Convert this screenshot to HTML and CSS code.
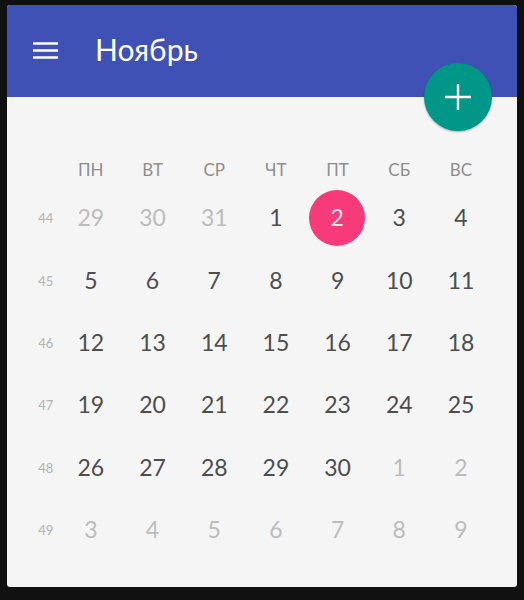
FILE: index.html
```html
<!DOCTYPE html>
<html lang="ru">
<head>
<meta charset="utf-8">
<title>Ноябрь</title>
<link rel="stylesheet" href="styles.css">
</head>
<body>
<main class="card">
  <header class="bar">
    <svg class="menu" viewBox="0 0 25 17" aria-hidden="true"><path d="M0 1.5H25M0 8.5H25M0 15.5H25"/></svg>
    <h1 class="title">Ноябрь</h1>
    <button class="fab" type="button" aria-label="Добавить">
      <svg viewBox="0 0 26 26" aria-hidden="true"><path d="M13 0V26M0 13H26"/></svg>
    </button>
  </header>
  <section class="cal">
    <div class="corner"></div>
    <div class="dow">ПН</div><div class="dow">ВТ</div><div class="dow">СР</div><div class="dow">ЧТ</div><div class="dow">ПТ</div><div class="dow">СБ</div><div class="dow">ВС</div>

    <div class="wk">44</div>
    <div class="d off">29</div><div class="d off">30</div><div class="d off">31</div><div class="d">1</div><div class="d"><span class="today">2</span></div><div class="d">3</div><div class="d">4</div>

    <div class="wk">45</div>
    <div class="d">5</div><div class="d">6</div><div class="d">7</div><div class="d">8</div><div class="d">9</div><div class="d">10</div><div class="d">11</div>

    <div class="wk">46</div>
    <div class="d">12</div><div class="d">13</div><div class="d">14</div><div class="d">15</div><div class="d">16</div><div class="d">17</div><div class="d">18</div>

    <div class="wk">47</div>
    <div class="d">19</div><div class="d">20</div><div class="d">21</div><div class="d">22</div><div class="d">23</div><div class="d">24</div><div class="d">25</div>

    <div class="wk">48</div>
    <div class="d">26</div><div class="d">27</div><div class="d">28</div><div class="d">29</div><div class="d">30</div><div class="d off">1</div><div class="d off">2</div>

    <div class="wk">49</div>
    <div class="d off">3</div><div class="d off">4</div><div class="d off">5</div><div class="d off">6</div><div class="d off">7</div><div class="d off">8</div><div class="d off">9</div>
  </section>
</main>
</body>
</html>
```
FILE: styles.css
```css
* { box-sizing: border-box; }
html, body { margin: 0; height: 100%; }
body {
  background: #111112;
  padding: 5px 7px 13px;
  font-family: "Lato", "Noto Sans", "Liberation Sans", sans-serif;
  overflow: hidden;
}
.card {
  height: 582px;
  background: #f5f5f6;
  border-radius: 3px;
}
.bar {
  position: relative;
  height: 92px;
  background: #3f51b5;
  border-radius: 3px 3px 0 0;
  display: flex;
  align-items: center;
  padding: 0 0 0 26px;
  color: #fff;
}
.menu {
  width: 25px;
  height: 17px;
  margin-top: -1px;
  fill: none;
  stroke: #fff;
  stroke-width: 2.4;
}
.title {
  margin: -5px 0 0 37px;
  font-size: 30px;
  font-weight: 400;
  line-height: 1;
}
.fab {
  position: absolute;
  right: 25px;
  bottom: -34px;
  width: 68px;
  height: 68px;
  border: 0;
  padding: 0;
  border-radius: 50%;
  background: #009688;
  box-shadow: 0 1px 2px rgba(0, 0, 0, .3);
  display: flex;
  align-items: center;
  justify-content: center;
}
.fab svg {
  width: 26px;
  height: 26px;
  fill: none;
  stroke: #fff;
  stroke-width: 2.4;
}
.cal {
  display: grid;
  grid-template-columns: 52.5px repeat(7, 61.7px);
  grid-template-rows: 90px repeat(6, 62.4px);
}
.dow {
  font-size: 17px;
  color: #8e8e8e;
  display: flex;
  align-items: flex-end;
  justify-content: center;
  padding: 0 0 7px 1px;
}
.wk {
  font-size: 13px;
  color: #b2b2b2;
  display: flex;
  align-items: center;
  justify-content: center;
  padding: 0 0 0 25px;
}
.d {
  font-size: 23px;
  color: #4d4d4d;
  display: flex;
  align-items: center;
  justify-content: center;
  padding: 0 0 2px 1px;
}
.off { color: #bcbcbc; }
.today {
  width: 56px;
  height: 56px;
  margin: 2px 1px 0 0;
  padding-bottom: 2px;
  border-radius: 50%;
  background: #f73a7a;
  color: #fde3ec;
  display: flex;
  align-items: center;
  justify-content: center;
}
```
